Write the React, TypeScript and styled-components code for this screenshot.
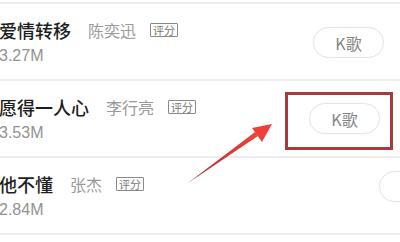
import styled, { createGlobalStyle } from "styled-components";

const Global = createGlobalStyle`
  html, body {
    margin: 0;
    padding: 0;
    background: #fff;
    font-family: "Noto Sans CJK SC", "Noto Sans", sans-serif;
  }
`;

const Screen = styled.div`
  position: relative;
  width: 400px;
  height: 242px;
  overflow: hidden;
  background: #fff;
  padding-top: 2px;
  box-sizing: border-box;
`;

const TopLine = styled.div`
  height: 2px;
  background: #ededed;
`;

const Row = styled.div`
  display: flex;
  align-items: center;
  height: 75px;
  border-bottom: 2px solid #ededed;
  margin-left: -1px;
`;

const Info = styled.div`
  flex: 1;
  display: flex;
  flex-direction: column;
`;

const TitleLine = styled.div`
  display: flex;
  align-items: center;
  gap: 14px;
`;

const Title = styled.span`
  font-size: 18px;
  line-height: 22px;
  font-weight: 500;
  color: #1e1e1e;
`;

const Artist = styled.span`
  font-size: 16px;
  line-height: 22px;
  color: #9a9a9a;
  margin-left: 3px;
`;

const Tag = styled.span`
  font-size: 11px;
  line-height: 12px;
  color: #777;
  border: 1.5px solid #8a8a8a;
  padding: 0 2px;
  border-radius: 1px;
`;

const Size = styled.div`
  font-family: "Liberation Sans", "Noto Sans", sans-serif;
  font-size: 16px;
  line-height: 18px;
  color: #929292;
  margin-top: 6px;
`;

const KButton = styled.div<{ $right: number; $dy: number }>`
  width: 69px;
  height: 29px;
  border: 1px solid #e4e4e4;
  border-radius: 16px;
  display: flex;
  align-items: center;
  justify-content: center;
  font-size: 16px;
  color: #858585;
  margin-right: ${(p) => p.$right}px;
  margin-top: ${(p) => p.$dy}px;
  flex-shrink: 0;
  box-shadow: 0 0 2px rgba(0, 0, 0, 0.04);
`;

const Highlight = styled.div`
  position: absolute;
  left: 285px;
  top: 92px;
  width: 102px;
  height: 52px;
  border: 3px solid #a83a3c;
`;

const Arrow = styled.svg`
  position: absolute;
  left: 0;
  top: 0;
  pointer-events: none;
`;

const songs = [
  { title: "爱情转移", artist: "陈奕迅", size: "3.27M", right: 16, dy: 2 },
  { title: "愿得一人心", artist: "李行亮", size: "3.53M", right: 20, dy: 0 },
  { title: "他不懂", artist: "张杰", size: "2.84M", right: -50, dy: -18 },
];

export default function App() {
  return (
    <>
      <Global />
      <Screen>
        <TopLine />
        {songs.map((s) => (
          <Row key={s.title}>
            <Info>
              <TitleLine>
                <Title>{s.title}</Title>
                <Artist>{s.artist}</Artist>
                <Tag>评分</Tag>
              </TitleLine>
              <Size>{s.size}</Size>
            </Info>
            <KButton $right={s.right} $dy={s.dy}>K歌</KButton>
          </Row>
        ))}
        <Highlight />
        <Arrow width="400" height="242" viewBox="0 0 400 242">
          <defs>
            <linearGradient id="ag" x1="188" y1="182" x2="271" y2="125" gradientUnits="userSpaceOnUse">
              <stop offset="0" stopColor="#8a2b2b" />
              <stop offset="0.5" stopColor="#d83a34" />
              <stop offset="1" stopColor="#f04a40" />
            </linearGradient>
          </defs>
          <polygon points="188,183 258,136 255,132" fill="url(#ag)" />
          <polygon points="272,124 252,128 262,142" fill="#ee4038" />
        </Arrow>
      </Screen>
    </>
  );
}
